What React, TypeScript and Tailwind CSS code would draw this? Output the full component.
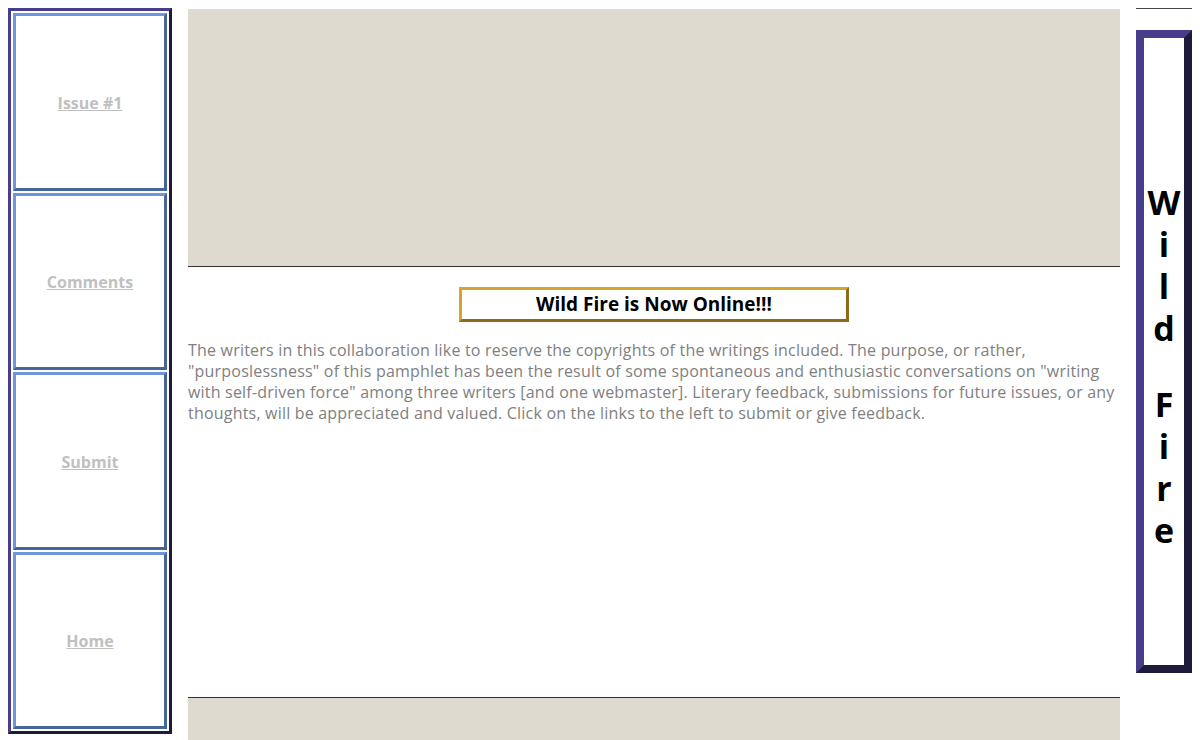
import React from "react";

const links = ["Issue #1", "Comments", "Submit", "Home"];

const letters = ["W", "i", "l", "d", "", "F", "i", "r", "e"];

const App = () => {
  return (
    <div
      className="flex h-[740px] w-[1200px] overflow-hidden bg-white"
      style={{ fontFamily: '"Open Sans", "Noto Sans", sans-serif' }}
    >
      {/* 왼쪽 메뉴 */}
      <div className="ml-2 mt-2 flex h-[726px] w-[164px] shrink-0 flex-col gap-[2px] border-[3px] border-t-[#483d8b] border-l-[#483d8b] border-b-[#1e1b3a] border-r-[#1e1b3a] p-[2px]">
        {links.map((label) => (
          <div
            key={label}
            className="flex flex-1 items-center justify-center border-[3px] border-t-[#6d96dc] border-l-[#6d96dc] border-b-[#46669a] border-r-[#46669a]"
          >
            <a href="#" className="mt-[2px] text-[16px] font-bold text-[#c0c0c0] underline">
              {label}
            </a>
          </div>
        ))}
      </div>

      {/* 본문 */}
      <div className="ml-4 mt-[9px] flex w-[932px] shrink-0 flex-col">
        <div className="h-[258px] border-b border-[#333333] bg-[#dedad0]" />
        <div className="mt-5 flex justify-center">
          <div className="flex h-[35px] w-[390px] items-center justify-center border-[3px] border-t-[#d4a52d] border-l-[#d4a52d] border-b-[#8c6a18] border-r-[#8c6a18]">
            <h1 className="text-[19px] font-bold text-black">Wild Fire is Now Online!!!</h1>
          </div>
        </div>
        <p className="mt-[18px] text-[16px] leading-[21px] tracking-[0.2px] text-[#808080]">
          The writers in this collaboration like to reserve the copyrights of the writings included. The purpose, or
          rather, "purposlessness" of this pamphlet has been the result of some spontaneous and enthusiastic
          conversations on "writing with self-driven force" among three writers [and one webmaster]. Literary
          feedback, submissions for future issues, or any thoughts, will be appreciated and valued. Click on the links
          to the left to submit or give feedback.
        </p>
        <div className="flex-1" />
        <div className="h-[43px] border-t border-[#333333] bg-[#dedad0]" />
      </div>

      {/* 오른쪽 타이틀 */}
      <div className="ml-4 mt-2 flex w-[56px] shrink-0 flex-col">
        <div className="h-px bg-[#444444]" />
        <div className="mt-[21px] flex h-[643px] flex-col items-center border-[8px] border-t-[#483d8b] border-l-[#483d8b] border-b-[#1e1b3a] border-r-[#1e1b3a] pt-[143px]">
          {letters.map((ch, i) =>
            ch ? (
              <span key={i} className="text-[34px] font-bold leading-[42px] text-black">
                {ch}
              </span>
            ) : (
              <span key={i} className="h-[34px]" />
            )
          )}
        </div>
      </div>
    </div>
  );
};

export default App;
